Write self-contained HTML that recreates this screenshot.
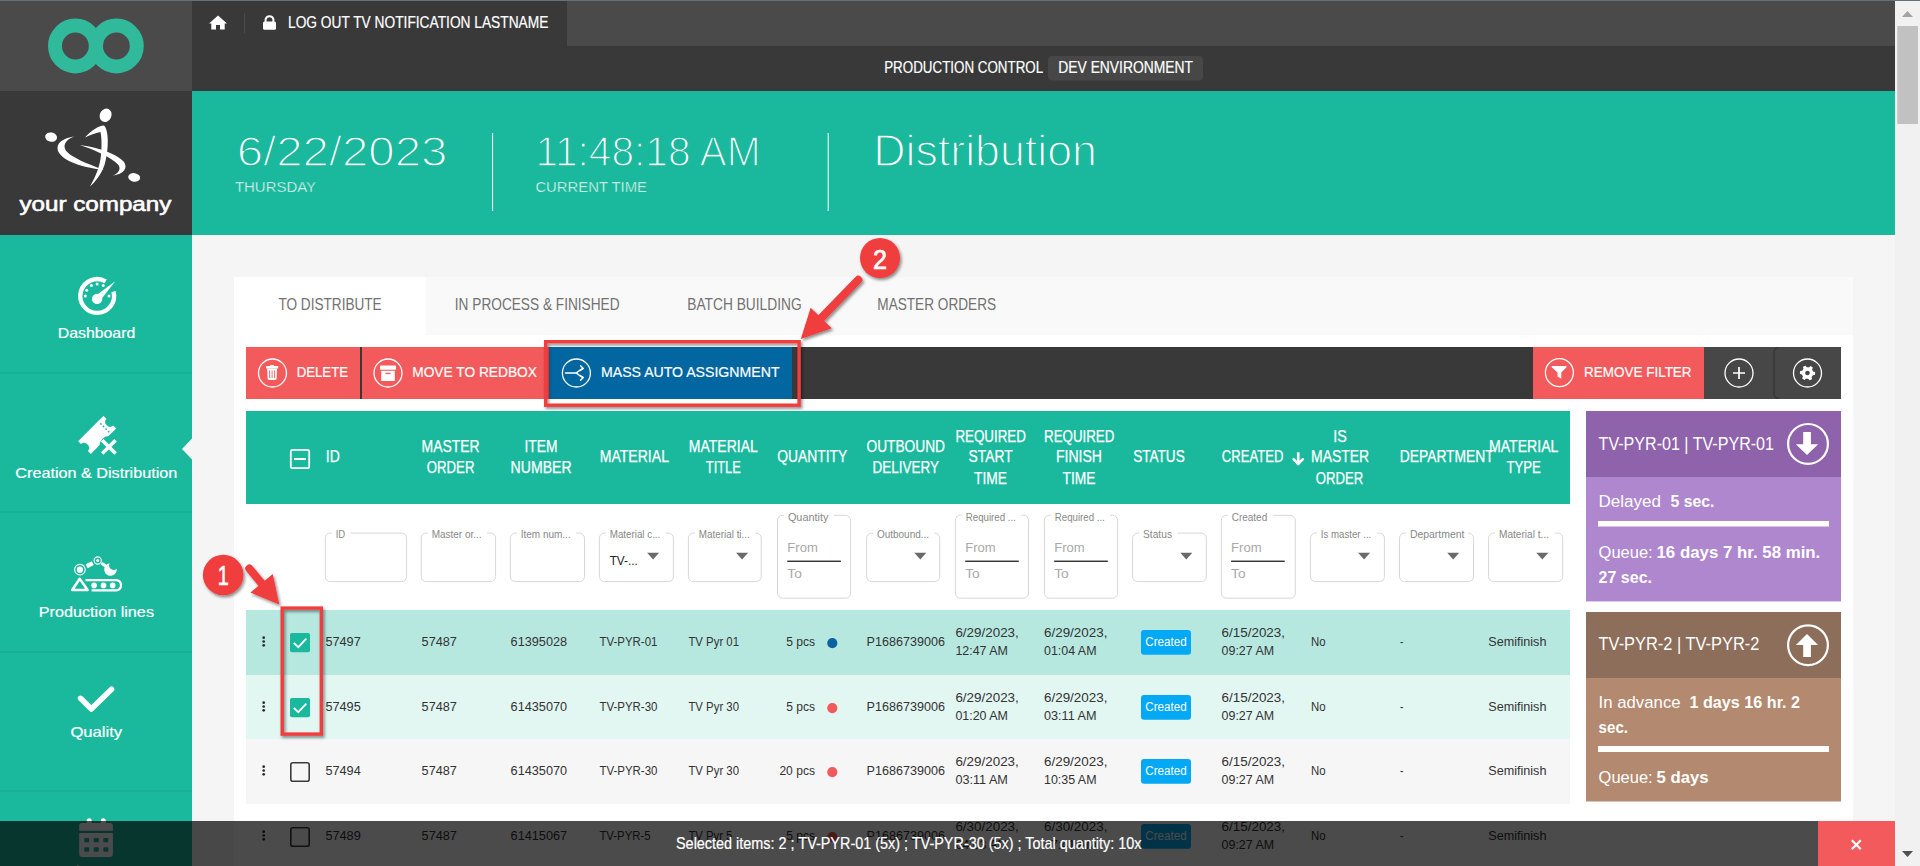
<!DOCTYPE html>
<html><head><meta charset="utf-8"><title>Distribution</title>
<style>
html,body{margin:0;padding:0;width:1920px;height:866px;overflow:hidden;background:#f5f5f5;}
svg{display:block;font-family:"Liberation Sans",sans-serif;}
</style></head>
<body>
<svg width="1920" height="866" viewBox="0 0 1920 866">
<rect x="0.00" y="0.00" width="1920.00" height="866.00" fill="#f5f5f5" />
<rect x="0.00" y="0.00" width="192.00" height="91.00" fill="#4a4a4a" />
<rect x="0.00" y="91.00" width="192.00" height="144.00" fill="#393939" />
<rect x="0.00" y="235.00" width="192.00" height="631.00" fill="#1ab99d" />
<rect x="0.00" y="372.50" width="192.00" height="1.00" fill="#16a78e" />
<rect x="0.00" y="511.50" width="192.00" height="1.00" fill="#16a78e" />
<rect x="0.00" y="651.50" width="192.00" height="1.00" fill="#16a78e" />
<rect x="0.00" y="790.50" width="192.00" height="1.00" fill="#16a78e" />
<circle cx="75.4" cy="46" r="20.4" fill="none" stroke="#30b99b" stroke-width="14"/>
<circle cx="116.4" cy="46" r="20.4" fill="none" stroke="#30b99b" stroke-width="14"/>
<g fill="#fff"><ellipse cx="105.6" cy="115.3" rx="5.8" ry="6.9" transform="rotate(25 105.6 115.3)"/><ellipse cx="51.1" cy="137.1" rx="6" ry="4.6" transform="rotate(12 51.1 137.1)"/><ellipse cx="134.2" cy="177.4" rx="6" ry="4.3" transform="rotate(8 134.2 177.4)"/><path d="M74.5 136.5 C63 138 55.5 143 58 151 C62 161 84 168 104 170 C88 164 70 157 65.5 150 C62.5 144 67 139 74.5 136.5 Z"/><path d="M79.7 145 C96 147 116 153 124 162 C128 168 124 174 112.6 175.7 C119 173 121 169 118.5 165 C111 157 95 150 79.7 145 Z"/><path d="M85 137.5 C92 130 98 126 104 125.5 C109 130 109 150 104.5 165 C101 175 95 182 90 186.5 C96 176 100 166 101 155 C102 145 101.5 137 100.5 132 C95 133 90 135 85 137.5 Z"/></g>
<text x="19.40" y="210.50" font-size="20.50" textLength="152.00" lengthAdjust="spacingAndGlyphs" fill="#fff"  stroke="#fff" stroke-width="0.6">your company</text>
<polygon points="182,449 192,438.5 192,459.5" fill="#f5f5f5"/>
<text x="57.70" y="338.30" font-size="15.55" textLength="77.60" lengthAdjust="spacingAndGlyphs" fill="#fff"  stroke="#fff" stroke-width="0.2">Dashboard</text>
<text x="15.30" y="478.00" font-size="15.55" textLength="162.00" lengthAdjust="spacingAndGlyphs" fill="#fff"  stroke="#fff" stroke-width="0.2">Creation &amp; Distribution</text>
<text x="38.70" y="617.30" font-size="15.55" textLength="115.30" lengthAdjust="spacingAndGlyphs" fill="#fff"  stroke="#fff" stroke-width="0.2">Production lines</text>
<text x="70.40" y="737.30" font-size="15.55" textLength="51.80" lengthAdjust="spacingAndGlyphs" fill="#fff"  stroke="#fff" stroke-width="0.2">Quality</text>
<g><path d="M113.5 291.6 A16.9 16.9 0 1 1 105.65 281.36" fill="none" stroke="#fff" stroke-width="4.4"/><circle cx="97.1" cy="298.9" r="5.2" fill="#fff"/><path d="M94.6 296.6 L115.2 281.2 L99.9 301.0 Z" fill="#fff"/><g fill="#fff"><circle cx="85.3" cy="296" r="1.5"/><circle cx="86.7" cy="290.2" r="1.5"/><circle cx="91.4" cy="285.6" r="1.5"/><circle cx="97.1" cy="284.1" r="1.5"/><circle cx="103.2" cy="285.6" r="1.5"/><circle cx="109" cy="296" r="1.5"/></g></g>
<path d="M78.1 441.2 L103.5 415.8 L106.4 418.7 A4.9 4.9 0 0 0 113.3 425.6 L116.2 428.5 L108.6 436.1 A10 10 0 0 0 99.4 445.3 L90.8 453.9 L87.9 451 A4.9 4.9 0 0 0 81 444.1 Z" fill="#fff"/>
<g fill="#1ab99d"><circle cx="100.9" cy="423.9" r="0.9"/><circle cx="103.5" cy="426.5" r="0.9"/><circle cx="106.1" cy="429.1" r="0.9"/><circle cx="108.7" cy="431.7" r="0.9"/></g>
<path d="M102.2 440.2 L115.6 453.6 M115.6 440.2 L102.2 453.6" stroke="#fff" stroke-width="3.6"/>
<g fill="none" stroke="#fff"><circle cx="79.9" cy="569.7" r="5.3" stroke-width="1.1"/><circle cx="97.7" cy="560.5" r="3.6" stroke-width="1.1"/><path d="M72.2 590 L79.7 578.7 L87.6 590 Z" stroke-width="2.5" stroke-linejoin="round"/><path d="M85.5 580.2 L116.6 580.2 A5.1 5.1 0 0 1 116.6 590.3 L91.6 590.3" stroke-width="2.2"/><path d="M86.6 566.2 L92.8 563.1" stroke-width="4.4"/><path d="M102.4 563.8 L106.5 566.8" stroke-width="3" stroke-linecap="round"/></g><g fill="#fff"><circle cx="79.9" cy="569.7" r="3.1"/><circle cx="97.7" cy="560.5" r="1.5"/><circle cx="94.1" cy="585.4" r="2.8"/><circle cx="103.5" cy="585.4" r="2.8"/><circle cx="112.7" cy="585.4" r="2.8"/><path d="M109.67 563.25 A6.3 6.3 0 1 0 116.77 568.83 A4.6 4.6 0 0 1 109.67 563.25 Z"/></g>
<path d="M80.5 698.3 L91.3 709 L111.5 689.2" fill="none" stroke="#fff" stroke-width="5.5" stroke-linecap="round" stroke-linejoin="round"/>
<g fill="#fff"><path d="M82.2 822.9 L109.9 822.9 A3 3 0 0 1 112.9 825.9 L112.9 830.7 L79.2 830.7 L79.2 825.9 A3 3 0 0 1 82.2 822.9 Z"/><path d="M79.2 833.0 L112.9 833.0 L112.9 854.1 A3 3 0 0 1 109.9 857.1 L82.2 857.1 A3 3 0 0 1 79.2 854.1 Z"/><rect x="86.7" y="818.3" width="5" height="7" rx="2.5"/><rect x="100.8" y="818.3" width="5" height="7" rx="2.5"/></g><g fill="#1ab99d"><rect x="84.2" y="837.9" width="5" height="4.3" rx="0.8"/><rect x="93.75" y="837.9" width="5" height="4.3" rx="0.8"/><rect x="103.3" y="837.9" width="5" height="4.3" rx="0.8"/><rect x="84.2" y="847.2" width="5" height="4.6" rx="0.8"/><rect x="93.75" y="847.2" width="5" height="4.6" rx="0.8"/><rect x="103.3" y="847.2" width="5" height="4.6" rx="0.8"/></g>
<text x="56.00" y="876.20" font-size="15.55" textLength="82.00" lengthAdjust="spacingAndGlyphs" fill="#fff"  stroke="#fff" stroke-width="0.2">Maintenance</text>
<rect x="192.00" y="0.00" width="1703.00" height="91.00" fill="#393939" />
<rect x="567.00" y="0.00" width="1328.00" height="46.00" fill="#4a4a4a" />
<path d="M218 15.5 L227 23.5 L224.7 23.5 L224.7 29.5 L220 29.5 L220 25 L216 25 L216 29.5 L211.3 29.5 L211.3 23.5 L209 23.5 Z" fill="#fff"/>
<rect x="244.00" y="13.40" width="1.00" height="20.10" fill="#4b4b4b" />
<path d="M265.6 22 L265.6 19.3 A4 4 0 0 1 273.4 19.3 L273.4 22" fill="none" stroke="#fff" stroke-width="2"/>
<rect x="263" y="21.5" width="13" height="8.3" rx="1.5" fill="#fff"/>
<text x="288.00" y="28.40" font-size="15.70" textLength="260.40" lengthAdjust="spacingAndGlyphs" fill="#fff"  stroke="#fff" stroke-width="0.2">LOG OUT TV NOTIFICATION LASTNAME</text>
<text x="884.20" y="73.25" font-size="16.13" textLength="159.00" lengthAdjust="spacingAndGlyphs" fill="#fff"  stroke="#fff" stroke-width="0.2">PRODUCTION CONTROL</text>
<rect x="1048" y="56" width="155" height="24.5" rx="4" fill="#474747"/>
<text x="1058.30" y="73.25" font-size="16.13" textLength="134.70" lengthAdjust="spacingAndGlyphs" fill="#fff"  stroke="#fff" stroke-width="0.2">DEV ENVIRONMENT</text>
<rect x="192.00" y="91.00" width="1703.00" height="144.00" fill="#1ab99d" />
<text x="236.70" y="166.40" font-size="41.81" textLength="210.70" lengthAdjust="spacingAndGlyphs" fill="#fff" stroke="#1ab99d" stroke-width="1.5">6/22/2023</text>
<text x="234.90" y="191.90" font-size="15.41" textLength="81.20" lengthAdjust="spacingAndGlyphs" fill="#fff" stroke="#1ab99d" stroke-width="0.45">THURSDAY</text>
<rect x="492.10" y="133.00" width="1.00" height="78.00" fill="#fff" />
<text x="535.40" y="166.40" font-size="41.81" textLength="225.20" lengthAdjust="spacingAndGlyphs" fill="#fff" stroke="#1ab99d" stroke-width="1.5">11:48:18 AM</text>
<text x="535.40" y="191.90" font-size="15.41" textLength="111.60" lengthAdjust="spacingAndGlyphs" fill="#fff" stroke="#1ab99d" stroke-width="0.45">CURRENT TIME</text>
<rect x="827.70" y="133.00" width="1.00" height="78.00" fill="#fff" />
<text x="873.20" y="166.40" font-size="43.75" textLength="223.80" lengthAdjust="spacingAndGlyphs" fill="#fff" stroke="#1ab99d" stroke-width="1.5">Distribution</text>
<rect x="0.00" y="0.00" width="1920.00" height="1.00" fill="#65717a" />
<rect x="234.00" y="277.00" width="1619.00" height="589.00" fill="#ffffff" />
<rect x="426.00" y="277.00" width="1427.00" height="58.00" fill="#f9f9f9" />
<text x="278.40" y="310.20" font-size="15.70" textLength="103.30" lengthAdjust="spacingAndGlyphs" fill="#717171" >TO DISTRIBUTE</text>
<text x="454.80" y="310.20" font-size="15.70" textLength="164.80" lengthAdjust="spacingAndGlyphs" fill="#717171" >IN PROCESS &amp; FINISHED</text>
<text x="687.30" y="310.20" font-size="15.70" textLength="114.30" lengthAdjust="spacingAndGlyphs" fill="#717171" >BATCH BUILDING</text>
<text x="877.30" y="310.20" font-size="15.70" textLength="118.80" lengthAdjust="spacingAndGlyphs" fill="#717171" >MASTER ORDERS</text>
<rect x="246.00" y="347.00" width="1595.00" height="52.00" fill="#393939" />
<rect x="246.00" y="347.00" width="303.50" height="52.00" fill="#f25a5b" />
<rect x="360.00" y="347.00" width="2.00" height="52.00" fill="#393939" />
<rect x="549.50" y="347.00" width="242.50" height="52.00" fill="#0266a1" />
<rect x="1533.00" y="347.00" width="171.00" height="52.00" fill="#f25a5b" />
<rect x="1704.00" y="347.00" width="137.00" height="52.00" fill="#474747" />
<path d="M1779 347.6 A5 5 0 0 0 1774 352.6 L1774 393.4 A5 5 0 0 0 1779 398.4" fill="none" stroke="#363636" stroke-width="1.3"/>
<circle cx="272.5" cy="373" r="14" fill="none" stroke="#fff" stroke-width="1.3"/>
<circle cx="388" cy="373" r="14" fill="none" stroke="#fff" stroke-width="1.3"/>
<circle cx="576.4" cy="373" r="14" fill="none" stroke="#fff" stroke-width="1.3"/>
<circle cx="1559.4" cy="372.6" r="14" fill="none" stroke="#fff" stroke-width="1.3"/>
<circle cx="1739" cy="373" r="14" fill="none" stroke="#fff" stroke-width="1.3"/>
<circle cx="1807.5" cy="373" r="14" fill="none" stroke="#fff" stroke-width="1.3"/>
<g fill="#fff"><rect x="266" y="366" width="12.2" height="2.4" rx="0.6"/><rect x="270.2" y="364.9" width="3.8" height="1.6" rx="0.6"/><path d="M267.2 368.6 L277 368.6 L276.6 378.6 A1.4 1.4 0 0 1 275.2 380 L269 380 A1.4 1.4 0 0 1 267.6 378.6 Z"/></g><g stroke="#f25a5b" stroke-width="0.9"><path d="M269.6 370.5 L269.6 378 M272.1 370.5 L272.1 378 M274.6 370.5 L274.6 378"/></g>
<g fill="#fff"><rect x="380" y="365.5" width="16" height="4.2" rx="0.8"/><path d="M381.2 370.8 L394.8 370.8 L394.8 381 L381.2 381 Z"/></g><rect x="385.5" y="372.8" width="5" height="1.3" fill="#f25a5b"/>
<g fill="none" stroke="#fff" stroke-width="1.4" stroke-linecap="round" stroke-linejoin="round"><path d="M565.5 373 L575.5 373 C578 373 579.5 369.5 583 368.5 M575.5 373 C578 373 579.5 376.5 583 377.5"/><path d="M580.5 365.8 L583.3 368.5 L580 370.6 M580 375.4 L583.3 377.5 L580.5 380.2"/></g>
<path d="M1552.2 366 L1566 366 A0.8 0.8 0 0 1 1566.5 367.2 L1561.3 372.6 L1561.3 378.8 L1557.5 376.6 L1557.5 372.6 L1551.7 367.2 A0.8 0.8 0 0 1 1552.2 366 Z" fill="#fff"/>
<path d="M1733 373 L1745 373 M1739 367 L1739 379" stroke="#fff" stroke-width="1.7"/>
<polygon points="1815.10,373.00 1815.03,373.99 1814.84,374.97 1812.77,375.18 1812.44,375.85 1812.02,376.47 1811.53,377.03 1812.13,379.03 1811.30,379.58 1810.41,380.02 1809.47,380.34 1808.24,378.65 1807.50,378.70 1806.76,378.65 1806.02,378.51 1804.59,380.02 1803.70,379.58 1802.87,379.03 1802.13,378.37 1802.98,376.47 1802.56,375.85 1802.23,375.18 1801.99,374.48 1799.97,373.99 1799.90,373.00 1799.97,372.01 1800.16,371.03 1802.23,370.82 1802.56,370.15 1802.98,369.53 1803.47,368.97 1802.87,366.97 1803.70,366.42 1804.59,365.98 1805.53,365.66 1806.76,367.35 1807.50,367.30 1808.24,367.35 1808.98,367.49 1810.41,365.98 1811.30,366.42 1812.13,366.97 1812.87,367.63 1812.02,369.53 1812.44,370.15 1812.77,370.82 1813.01,371.52 1815.03,372.01" fill="#fff"/><circle cx="1807.5" cy="373" r="2.3" fill="#474747"/>
<text x="296.70" y="377.40" font-size="15.55" textLength="51.30" lengthAdjust="spacingAndGlyphs" fill="#fff"  stroke="#fff" stroke-width="0.2">DELETE</text>
<text x="412.20" y="377.40" font-size="15.55" textLength="124.80" lengthAdjust="spacingAndGlyphs" fill="#fff"  stroke="#fff" stroke-width="0.2">MOVE TO REDBOX</text>
<text x="601.00" y="377.20" font-size="15.55" textLength="178.50" lengthAdjust="spacingAndGlyphs" fill="#fff"  stroke="#fff" stroke-width="0.2">MASS AUTO ASSIGNMENT</text>
<text x="1584.00" y="377.30" font-size="15.55" textLength="107.60" lengthAdjust="spacingAndGlyphs" fill="#fff"  stroke="#fff" stroke-width="0.2">REMOVE FILTER</text>
<rect x="246.00" y="411.00" width="1324.00" height="93.00" fill="#1ab99d" />
<rect x="290.8" y="449.8" width="18.4" height="18.4" rx="2" fill="none" stroke="#fff" stroke-width="1.8"/>
<rect x="294" y="458" width="12" height="2" fill="#fff"/>
<text x="325.80" y="462.10" font-size="15.77" textLength="14.00" lengthAdjust="spacingAndGlyphs" fill="#fff"  stroke="#fff" stroke-width="0.25">ID</text>
<text x="421.60" y="452.30" font-size="15.77" textLength="58.10" lengthAdjust="spacingAndGlyphs" fill="#fff"  stroke="#fff" stroke-width="0.25">MASTER</text>
<text x="426.80" y="473.00" font-size="15.77" textLength="47.60" lengthAdjust="spacingAndGlyphs" fill="#fff"  stroke="#fff" stroke-width="0.25">ORDER</text>
<text x="524.50" y="452.30" font-size="15.77" textLength="33.00" lengthAdjust="spacingAndGlyphs" fill="#fff"  stroke="#fff" stroke-width="0.25">ITEM</text>
<text x="510.60" y="473.00" font-size="15.77" textLength="61.00" lengthAdjust="spacingAndGlyphs" fill="#fff"  stroke="#fff" stroke-width="0.25">NUMBER</text>
<text x="599.70" y="462.10" font-size="15.77" textLength="69.30" lengthAdjust="spacingAndGlyphs" fill="#fff"  stroke="#fff" stroke-width="0.25">MATERIAL</text>
<text x="688.80" y="452.30" font-size="15.77" textLength="69.00" lengthAdjust="spacingAndGlyphs" fill="#fff"  stroke="#fff" stroke-width="0.25">MATERIAL</text>
<text x="705.80" y="473.00" font-size="15.77" textLength="35.00" lengthAdjust="spacingAndGlyphs" fill="#fff"  stroke="#fff" stroke-width="0.25">TITLE</text>
<text x="777.25" y="462.10" font-size="15.77" textLength="70.00" lengthAdjust="spacingAndGlyphs" fill="#fff"  stroke="#fff" stroke-width="0.25">QUANTITY</text>
<text x="866.50" y="452.30" font-size="15.77" textLength="78.50" lengthAdjust="spacingAndGlyphs" fill="#fff"  stroke="#fff" stroke-width="0.25">OUTBOUND</text>
<text x="872.50" y="473.00" font-size="15.77" textLength="66.50" lengthAdjust="spacingAndGlyphs" fill="#fff"  stroke="#fff" stroke-width="0.25">DELIVERY</text>
<text x="955.40" y="441.50" font-size="15.77" textLength="70.50" lengthAdjust="spacingAndGlyphs" fill="#fff"  stroke="#fff" stroke-width="0.25">REQUIRED</text>
<text x="968.60" y="462.10" font-size="15.77" textLength="44.00" lengthAdjust="spacingAndGlyphs" fill="#fff"  stroke="#fff" stroke-width="0.25">START</text>
<text x="974.10" y="483.70" font-size="15.77" textLength="33.00" lengthAdjust="spacingAndGlyphs" fill="#fff"  stroke="#fff" stroke-width="0.25">TIME</text>
<text x="1044.00" y="441.50" font-size="15.77" textLength="70.40" lengthAdjust="spacingAndGlyphs" fill="#fff"  stroke="#fff" stroke-width="0.25">REQUIRED</text>
<text x="1056.00" y="462.10" font-size="15.77" textLength="46.00" lengthAdjust="spacingAndGlyphs" fill="#fff"  stroke="#fff" stroke-width="0.25">FINISH</text>
<text x="1062.50" y="483.70" font-size="15.77" textLength="33.00" lengthAdjust="spacingAndGlyphs" fill="#fff"  stroke="#fff" stroke-width="0.25">TIME</text>
<text x="1133.20" y="462.10" font-size="15.77" textLength="51.50" lengthAdjust="spacingAndGlyphs" fill="#fff"  stroke="#fff" stroke-width="0.25">STATUS</text>
<text x="1221.80" y="462.10" font-size="15.77" textLength="61.60" lengthAdjust="spacingAndGlyphs" fill="#fff"  stroke="#fff" stroke-width="0.25">CREATED</text>
<path d="M1298.2 452.3 L1298.2 462" stroke="#fff" stroke-width="2.6"/><path d="M1293.6 459.2 L1298.2 464 L1302.8 459.2" fill="none" stroke="#fff" stroke-width="2.6" stroke-linecap="round" stroke-linejoin="round"/>
<text x="1333.25" y="441.60" font-size="15.77" textLength="13.50" lengthAdjust="spacingAndGlyphs" fill="#fff"  stroke="#fff" stroke-width="0.25">IS</text>
<text x="1311.00" y="462.10" font-size="15.77" textLength="58.20" lengthAdjust="spacingAndGlyphs" fill="#fff"  stroke="#fff" stroke-width="0.25">MASTER</text>
<text x="1315.70" y="483.70" font-size="15.77" textLength="47.50" lengthAdjust="spacingAndGlyphs" fill="#fff"  stroke="#fff" stroke-width="0.25">ORDER</text>
<text x="1399.80" y="462.10" font-size="15.77" textLength="93.90" lengthAdjust="spacingAndGlyphs" fill="#fff"  stroke="#fff" stroke-width="0.25">DEPARTMENT</text>
<text x="1489.00" y="452.30" font-size="15.77" textLength="69.40" lengthAdjust="spacingAndGlyphs" fill="#fff"  stroke="#fff" stroke-width="0.25">MATERIAL</text>
<text x="1506.45" y="473.00" font-size="15.77" textLength="34.50" lengthAdjust="spacingAndGlyphs" fill="#fff"  stroke="#fff" stroke-width="0.25">TYPE</text>
<path d="M331.80 533.10 L330.30 533.10 A5 5 0 0 0 325.30 538.10 L325.30 576.60 A5 5 0 0 0 330.30 581.60 L401.60 581.60 A5 5 0 0 0 406.60 576.60 L406.60 538.10 A5 5 0 0 0 401.60 533.10 L350.70 533.10" fill="none" stroke="#d8d8d8" stroke-width="1"/>
<text x="335.70" y="538.20" font-size="11.19" textLength="9.50" lengthAdjust="spacingAndGlyphs" fill="#888888" >ID</text>
<path d="M427.75 533.10 L426.25 533.10 A5 5 0 0 0 421.25 538.10 L421.25 576.60 A5 5 0 0 0 426.25 581.60 L490.60 581.60 A5 5 0 0 0 495.60 576.60 L495.60 538.10 A5 5 0 0 0 490.60 533.10 L487.15 533.10" fill="none" stroke="#d8d8d8" stroke-width="1"/>
<text x="431.65" y="538.20" font-size="11.19" textLength="50.00" lengthAdjust="spacingAndGlyphs" fill="#888888" >Master or...</text>
<path d="M516.80 533.10 L515.30 533.10 A5 5 0 0 0 510.30 538.10 L510.30 576.60 A5 5 0 0 0 515.30 581.60 L579.50 581.60 A5 5 0 0 0 584.50 576.60 L584.50 538.10 A5 5 0 0 0 579.50 533.10 L576.20 533.10" fill="none" stroke="#d8d8d8" stroke-width="1"/>
<text x="520.70" y="538.20" font-size="11.19" textLength="50.00" lengthAdjust="spacingAndGlyphs" fill="#888888" >Item num...</text>
<path d="M605.90 533.10 L604.40 533.10 A5 5 0 0 0 599.40 538.10 L599.40 576.60 A5 5 0 0 0 604.40 581.60 L668.40 581.60 A5 5 0 0 0 673.40 576.60 L673.40 538.10 A5 5 0 0 0 668.40 533.10 L665.80 533.10" fill="none" stroke="#d8d8d8" stroke-width="1"/>
<text x="609.80" y="538.20" font-size="11.19" textLength="50.50" lengthAdjust="spacingAndGlyphs" fill="#888888" >Material c...</text>
<polygon points="647.10,552.8 659.10,552.8 653.10,559.4" fill="#6a6a6a"/>
<text x="609.70" y="564.60" font-size="11.92" textLength="28.00" lengthAdjust="spacingAndGlyphs" fill="#222" >TV-...</text>
<path d="M694.90 533.10 L693.40 533.10 A5 5 0 0 0 688.40 538.10 L688.40 576.60 A5 5 0 0 0 693.40 581.60 L756.20 581.60 A5 5 0 0 0 761.20 576.60 L761.20 538.10 A5 5 0 0 0 756.20 533.10 L755.30 533.10" fill="none" stroke="#d8d8d8" stroke-width="1"/>
<text x="698.80" y="538.20" font-size="11.19" textLength="51.00" lengthAdjust="spacingAndGlyphs" fill="#888888" >Material ti...</text>
<polygon points="736.10,552.8 748.10,552.8 742.10,559.4" fill="#6a6a6a"/>
<path d="M784.00 515.30 L782.50 515.30 A5 5 0 0 0 777.50 520.30 L777.50 593.20 A5 5 0 0 0 782.50 598.20 L845.60 598.20 A5 5 0 0 0 850.60 593.20 L850.60 520.30 A5 5 0 0 0 845.60 515.30 L833.90 515.30" fill="none" stroke="#d8d8d8" stroke-width="1"/>
<text x="787.90" y="521.00" font-size="11.19" textLength="40.50" lengthAdjust="spacingAndGlyphs" fill="#888888" >Quantity</text>
<text x="787.30" y="552.00" font-size="12.79" textLength="30.50" lengthAdjust="spacingAndGlyphs" fill="#a9a9a9" >From</text>
<rect x="787.30" y="560.60" width="53.60" height="1.30" fill="#1e1e1e" />
<text x="787.30" y="578.00" font-size="12.79" textLength="14.50" lengthAdjust="spacingAndGlyphs" fill="#a9a9a9" >To</text>
<path d="M873.10 533.10 L871.60 533.10 A5 5 0 0 0 866.60 538.10 L866.60 576.60 A5 5 0 0 0 871.60 581.60 L934.70 581.60 A5 5 0 0 0 939.70 576.60 L939.70 538.10 A5 5 0 0 0 934.70 533.10 L934.50 533.10" fill="none" stroke="#d8d8d8" stroke-width="1"/>
<text x="877.00" y="538.20" font-size="11.19" textLength="52.00" lengthAdjust="spacingAndGlyphs" fill="#888888" >Outbound...</text>
<polygon points="914.30,552.8 926.30,552.8 920.30,559.4" fill="#6a6a6a"/>
<path d="M961.90 515.30 L960.40 515.30 A5 5 0 0 0 955.40 520.30 L955.40 593.20 A5 5 0 0 0 960.40 598.20 L1023.50 598.20 A5 5 0 0 0 1028.50 593.20 L1028.50 520.30 A5 5 0 0 0 1023.50 515.30 L1021.30 515.30" fill="none" stroke="#d8d8d8" stroke-width="1"/>
<text x="965.80" y="521.00" font-size="11.19" textLength="50.00" lengthAdjust="spacingAndGlyphs" fill="#888888" >Required ...</text>
<text x="965.20" y="552.00" font-size="12.79" textLength="30.50" lengthAdjust="spacingAndGlyphs" fill="#a9a9a9" >From</text>
<rect x="965.20" y="560.60" width="53.60" height="1.30" fill="#1e1e1e" />
<text x="965.20" y="578.00" font-size="12.79" textLength="14.50" lengthAdjust="spacingAndGlyphs" fill="#a9a9a9" >To</text>
<path d="M1050.90 515.30 L1049.40 515.30 A5 5 0 0 0 1044.40 520.30 L1044.40 593.20 A5 5 0 0 0 1049.40 598.20 L1112.60 598.20 A5 5 0 0 0 1117.60 593.20 L1117.60 520.30 A5 5 0 0 0 1112.60 515.30 L1110.30 515.30" fill="none" stroke="#d8d8d8" stroke-width="1"/>
<text x="1054.80" y="521.00" font-size="11.19" textLength="50.00" lengthAdjust="spacingAndGlyphs" fill="#888888" >Required ...</text>
<text x="1054.20" y="552.00" font-size="12.79" textLength="30.50" lengthAdjust="spacingAndGlyphs" fill="#a9a9a9" >From</text>
<rect x="1054.20" y="560.60" width="53.60" height="1.30" fill="#1e1e1e" />
<text x="1054.20" y="578.00" font-size="12.79" textLength="14.50" lengthAdjust="spacingAndGlyphs" fill="#a9a9a9" >To</text>
<path d="M1139.10 533.10 L1137.60 533.10 A5 5 0 0 0 1132.60 538.10 L1132.60 576.60 A5 5 0 0 0 1137.60 581.60 L1201.30 581.60 A5 5 0 0 0 1206.30 576.60 L1206.30 538.10 A5 5 0 0 0 1201.30 533.10 L1177.50 533.10" fill="none" stroke="#d8d8d8" stroke-width="1"/>
<text x="1143.00" y="538.20" font-size="11.19" textLength="29.00" lengthAdjust="spacingAndGlyphs" fill="#888888" >Status</text>
<polygon points="1180.30,552.8 1192.30,552.8 1186.30,559.4" fill="#6a6a6a"/>
<path d="M1227.80 515.30 L1226.30 515.30 A5 5 0 0 0 1221.30 520.30 L1221.30 593.20 A5 5 0 0 0 1226.30 598.20 L1290.30 598.20 A5 5 0 0 0 1295.30 593.20 L1295.30 520.30 A5 5 0 0 0 1290.30 515.30 L1272.70 515.30" fill="none" stroke="#d8d8d8" stroke-width="1"/>
<text x="1231.70" y="521.00" font-size="11.19" textLength="35.50" lengthAdjust="spacingAndGlyphs" fill="#888888" >Created</text>
<text x="1231.10" y="552.00" font-size="12.79" textLength="30.50" lengthAdjust="spacingAndGlyphs" fill="#a9a9a9" >From</text>
<rect x="1231.10" y="560.60" width="53.60" height="1.30" fill="#1e1e1e" />
<text x="1231.10" y="578.00" font-size="12.79" textLength="14.50" lengthAdjust="spacingAndGlyphs" fill="#a9a9a9" >To</text>
<path d="M1316.90 533.10 L1315.40 533.10 A5 5 0 0 0 1310.40 538.10 L1310.40 576.60 A5 5 0 0 0 1315.40 581.60 L1379.40 581.60 A5 5 0 0 0 1384.40 576.60 L1384.40 538.10 A5 5 0 0 0 1379.40 533.10 L1376.80 533.10" fill="none" stroke="#d8d8d8" stroke-width="1"/>
<text x="1320.80" y="538.20" font-size="11.19" textLength="50.50" lengthAdjust="spacingAndGlyphs" fill="#888888" >Is master ...</text>
<polygon points="1358.10,552.8 1370.10,552.8 1364.10,559.4" fill="#6a6a6a"/>
<path d="M1406.00 533.10 L1404.50 533.10 A5 5 0 0 0 1399.50 538.10 L1399.50 576.60 A5 5 0 0 0 1404.50 581.60 L1468.50 581.60 A5 5 0 0 0 1473.50 576.60 L1473.50 538.10 A5 5 0 0 0 1468.50 533.10 L1469.90 533.10" fill="none" stroke="#d8d8d8" stroke-width="1"/>
<text x="1409.90" y="538.20" font-size="11.19" textLength="54.50" lengthAdjust="spacingAndGlyphs" fill="#888888" >Department</text>
<polygon points="1447.20,552.8 1459.20,552.8 1453.20,559.4" fill="#6a6a6a"/>
<path d="M1495.10 533.10 L1493.60 533.10 A5 5 0 0 0 1488.60 538.10 L1488.60 576.60 A5 5 0 0 0 1493.60 581.60 L1557.70 581.60 A5 5 0 0 0 1562.70 576.60 L1562.70 538.10 A5 5 0 0 0 1557.70 533.10 L1554.50 533.10" fill="none" stroke="#d8d8d8" stroke-width="1"/>
<text x="1499.00" y="538.20" font-size="11.19" textLength="50.00" lengthAdjust="spacingAndGlyphs" fill="#888888" >Material t...</text>
<polygon points="1536.30,552.8 1548.30,552.8 1542.30,559.4" fill="#6a6a6a"/>
<rect x="246.00" y="610.00" width="1324.00" height="65.00" fill="#b6e8e0" />
<circle cx="263.7" cy="637.70" r="1.35" fill="#2a2a2a"/>
<circle cx="263.7" cy="641.50" r="1.35" fill="#2a2a2a"/>
<circle cx="263.7" cy="645.30" r="1.35" fill="#2a2a2a"/>
<rect x="290" y="633.00" width="20" height="19.3" rx="2" fill="#1ab99d"/>
<path d="M293.8 642.80 L298.3 647.20 L306.3 638.60" fill="none" stroke="#fff" stroke-width="1.8"/>
<text x="325.40" y="645.90" font-size="12.71" textLength="35.34" lengthAdjust="spacingAndGlyphs" fill="#333333" >57497</text>
<text x="421.60" y="645.90" font-size="12.71" textLength="35.34" lengthAdjust="spacingAndGlyphs" fill="#333333" >57487</text>
<text x="510.60" y="645.90" font-size="12.71" textLength="56.55" lengthAdjust="spacingAndGlyphs" fill="#333333" >61395028</text>
<text x="599.40" y="645.90" font-size="12.50" textLength="58.07" lengthAdjust="spacingAndGlyphs" fill="#333333" >TV-PYR-01</text>
<text x="688.40" y="645.90" font-size="12.50" textLength="50.60" lengthAdjust="spacingAndGlyphs" fill="#333333" >TV Pyr 01</text>
<text x="786.14" y="645.90" font-size="12.71" textLength="28.86" lengthAdjust="spacingAndGlyphs" fill="#333333" >5 pcs</text>
<circle cx="832.3" cy="643.10" r="5.1" fill="#0a62a0"/>
<text x="866.60" y="645.90" font-size="12.71" textLength="78.32" lengthAdjust="spacingAndGlyphs" fill="#333333" >P1686739006</text>
<text x="955.40" y="637.10" font-size="12.71" textLength="63.40" lengthAdjust="spacingAndGlyphs" fill="#333333" >6/29/2023,</text>
<text x="955.40" y="655.00" font-size="12.71" textLength="52.50" lengthAdjust="spacingAndGlyphs" fill="#333333" >12:47 AM</text>
<text x="1044.00" y="637.10" font-size="12.71" textLength="63.40" lengthAdjust="spacingAndGlyphs" fill="#333333" >6/29/2023,</text>
<text x="1044.00" y="655.00" font-size="12.71" textLength="52.50" lengthAdjust="spacingAndGlyphs" fill="#333333" >01:04 AM</text>
<rect x="1141" y="630.00" width="50" height="24.8" rx="3" fill="#03a9f4"/>
<text x="1145.30" y="645.90" font-size="12.50" textLength="41.30" lengthAdjust="spacingAndGlyphs" fill="#fff" >Created</text>
<text x="1221.60" y="637.10" font-size="12.71" textLength="63.40" lengthAdjust="spacingAndGlyphs" fill="#333333" >6/15/2023,</text>
<text x="1221.60" y="655.00" font-size="12.71" textLength="52.50" lengthAdjust="spacingAndGlyphs" fill="#333333" >09:27 AM</text>
<text x="1310.90" y="645.90" font-size="12.50" textLength="14.60" lengthAdjust="spacingAndGlyphs" fill="#333333" >No</text>
<text x="1400.00" y="645.90" font-size="12.71" textLength="3.40" lengthAdjust="spacingAndGlyphs" fill="#333333" >-</text>
<text x="1488.30" y="645.90" font-size="12.50" textLength="58.10" lengthAdjust="spacingAndGlyphs" fill="#333333" >Semifinish</text>
<rect x="246.00" y="675.00" width="1324.00" height="64.00" fill="#e2f6f2" />
<circle cx="263.7" cy="702.70" r="1.35" fill="#2a2a2a"/>
<circle cx="263.7" cy="706.50" r="1.35" fill="#2a2a2a"/>
<circle cx="263.7" cy="710.30" r="1.35" fill="#2a2a2a"/>
<rect x="290" y="698.00" width="20" height="19.3" rx="2" fill="#1ab99d"/>
<path d="M293.8 707.80 L298.3 712.20 L306.3 703.60" fill="none" stroke="#fff" stroke-width="1.8"/>
<text x="325.40" y="710.90" font-size="12.71" textLength="35.34" lengthAdjust="spacingAndGlyphs" fill="#333333" >57495</text>
<text x="421.60" y="710.90" font-size="12.71" textLength="35.34" lengthAdjust="spacingAndGlyphs" fill="#333333" >57487</text>
<text x="510.60" y="710.90" font-size="12.71" textLength="56.55" lengthAdjust="spacingAndGlyphs" fill="#333333" >61435070</text>
<text x="599.40" y="710.90" font-size="12.50" textLength="58.07" lengthAdjust="spacingAndGlyphs" fill="#333333" >TV-PYR-30</text>
<text x="688.40" y="710.90" font-size="12.50" textLength="50.60" lengthAdjust="spacingAndGlyphs" fill="#333333" >TV Pyr 30</text>
<text x="786.14" y="710.90" font-size="12.71" textLength="28.86" lengthAdjust="spacingAndGlyphs" fill="#333333" >5 pcs</text>
<circle cx="832.3" cy="708.10" r="5.1" fill="#f05a5a"/>
<text x="866.60" y="710.90" font-size="12.71" textLength="78.32" lengthAdjust="spacingAndGlyphs" fill="#333333" >P1686739006</text>
<text x="955.40" y="702.10" font-size="12.71" textLength="63.40" lengthAdjust="spacingAndGlyphs" fill="#333333" >6/29/2023,</text>
<text x="955.40" y="720.00" font-size="12.71" textLength="52.50" lengthAdjust="spacingAndGlyphs" fill="#333333" >01:20 AM</text>
<text x="1044.00" y="702.10" font-size="12.71" textLength="63.40" lengthAdjust="spacingAndGlyphs" fill="#333333" >6/29/2023,</text>
<text x="1044.00" y="720.00" font-size="12.71" textLength="52.50" lengthAdjust="spacingAndGlyphs" fill="#333333" >03:11 AM</text>
<rect x="1141" y="695.00" width="50" height="24.8" rx="3" fill="#03a9f4"/>
<text x="1145.30" y="710.90" font-size="12.50" textLength="41.30" lengthAdjust="spacingAndGlyphs" fill="#fff" >Created</text>
<text x="1221.60" y="702.10" font-size="12.71" textLength="63.40" lengthAdjust="spacingAndGlyphs" fill="#333333" >6/15/2023,</text>
<text x="1221.60" y="720.00" font-size="12.71" textLength="52.50" lengthAdjust="spacingAndGlyphs" fill="#333333" >09:27 AM</text>
<text x="1310.90" y="710.90" font-size="12.50" textLength="14.60" lengthAdjust="spacingAndGlyphs" fill="#333333" >No</text>
<text x="1400.00" y="710.90" font-size="12.71" textLength="3.40" lengthAdjust="spacingAndGlyphs" fill="#333333" >-</text>
<text x="1488.30" y="710.90" font-size="12.50" textLength="58.10" lengthAdjust="spacingAndGlyphs" fill="#333333" >Semifinish</text>
<rect x="246.00" y="739.00" width="1324.00" height="65.00" fill="#f6f6f6" />
<circle cx="263.7" cy="766.70" r="1.35" fill="#2a2a2a"/>
<circle cx="263.7" cy="770.50" r="1.35" fill="#2a2a2a"/>
<circle cx="263.7" cy="774.30" r="1.35" fill="#2a2a2a"/>
<rect x="290.8" y="762.80" width="18.4" height="18.4" rx="2" fill="none" stroke="#3c3c3c" stroke-width="1.6"/>
<text x="325.40" y="774.90" font-size="12.71" textLength="35.34" lengthAdjust="spacingAndGlyphs" fill="#333333" >57494</text>
<text x="421.60" y="774.90" font-size="12.71" textLength="35.34" lengthAdjust="spacingAndGlyphs" fill="#333333" >57487</text>
<text x="510.60" y="774.90" font-size="12.71" textLength="56.55" lengthAdjust="spacingAndGlyphs" fill="#333333" >61435070</text>
<text x="599.40" y="774.90" font-size="12.50" textLength="58.07" lengthAdjust="spacingAndGlyphs" fill="#333333" >TV-PYR-30</text>
<text x="688.40" y="774.90" font-size="12.50" textLength="50.60" lengthAdjust="spacingAndGlyphs" fill="#333333" >TV Pyr 30</text>
<text x="779.42" y="774.90" font-size="12.71" textLength="35.58" lengthAdjust="spacingAndGlyphs" fill="#333333" >20 pcs</text>
<circle cx="832.3" cy="772.10" r="5.1" fill="#f05a5a"/>
<text x="866.60" y="774.90" font-size="12.71" textLength="78.32" lengthAdjust="spacingAndGlyphs" fill="#333333" >P1686739006</text>
<text x="955.40" y="766.10" font-size="12.71" textLength="63.40" lengthAdjust="spacingAndGlyphs" fill="#333333" >6/29/2023,</text>
<text x="955.40" y="784.00" font-size="12.71" textLength="52.50" lengthAdjust="spacingAndGlyphs" fill="#333333" >03:11 AM</text>
<text x="1044.00" y="766.10" font-size="12.71" textLength="63.40" lengthAdjust="spacingAndGlyphs" fill="#333333" >6/29/2023,</text>
<text x="1044.00" y="784.00" font-size="12.71" textLength="52.50" lengthAdjust="spacingAndGlyphs" fill="#333333" >10:35 AM</text>
<rect x="1141" y="759.00" width="50" height="24.8" rx="3" fill="#03a9f4"/>
<text x="1145.30" y="774.90" font-size="12.50" textLength="41.30" lengthAdjust="spacingAndGlyphs" fill="#fff" >Created</text>
<text x="1221.60" y="766.10" font-size="12.71" textLength="63.40" lengthAdjust="spacingAndGlyphs" fill="#333333" >6/15/2023,</text>
<text x="1221.60" y="784.00" font-size="12.71" textLength="52.50" lengthAdjust="spacingAndGlyphs" fill="#333333" >09:27 AM</text>
<text x="1310.90" y="774.90" font-size="12.50" textLength="14.60" lengthAdjust="spacingAndGlyphs" fill="#333333" >No</text>
<text x="1400.00" y="774.90" font-size="12.71" textLength="3.40" lengthAdjust="spacingAndGlyphs" fill="#333333" >-</text>
<text x="1488.30" y="774.90" font-size="12.50" textLength="58.10" lengthAdjust="spacingAndGlyphs" fill="#333333" >Semifinish</text>
<rect x="246.00" y="804.00" width="1324.00" height="65.00" fill="#ffffff" />
<circle cx="263.7" cy="831.70" r="1.35" fill="#2a2a2a"/>
<circle cx="263.7" cy="835.50" r="1.35" fill="#2a2a2a"/>
<circle cx="263.7" cy="839.30" r="1.35" fill="#2a2a2a"/>
<rect x="290.8" y="827.80" width="18.4" height="18.4" rx="2" fill="none" stroke="#3c3c3c" stroke-width="1.6"/>
<text x="325.40" y="839.90" font-size="12.71" textLength="35.34" lengthAdjust="spacingAndGlyphs" fill="#333333" >57489</text>
<text x="421.60" y="839.90" font-size="12.71" textLength="35.34" lengthAdjust="spacingAndGlyphs" fill="#333333" >57487</text>
<text x="510.60" y="839.90" font-size="12.71" textLength="56.55" lengthAdjust="spacingAndGlyphs" fill="#333333" >61415067</text>
<text x="599.40" y="839.90" font-size="12.50" textLength="51.12" lengthAdjust="spacingAndGlyphs" fill="#333333" >TV-PYR-5</text>
<text x="688.40" y="839.90" font-size="12.50" textLength="44.00" lengthAdjust="spacingAndGlyphs" fill="#333333" >TV Pyr 5</text>
<text x="786.14" y="839.90" font-size="12.71" textLength="28.86" lengthAdjust="spacingAndGlyphs" fill="#333333" >5 pcs</text>
<circle cx="832.3" cy="837.10" r="5.1" fill="#f05a5a"/>
<text x="866.60" y="839.90" font-size="12.71" textLength="78.32" lengthAdjust="spacingAndGlyphs" fill="#333333" >P1686739006</text>
<text x="955.40" y="831.10" font-size="12.71" textLength="63.40" lengthAdjust="spacingAndGlyphs" fill="#333333" >6/30/2023,</text>
<text x="955.40" y="849.00" font-size="12.71" textLength="52.50" lengthAdjust="spacingAndGlyphs" fill="#333333" >04:03 AM</text>
<text x="1044.00" y="831.10" font-size="12.71" textLength="63.40" lengthAdjust="spacingAndGlyphs" fill="#333333" >6/30/2023,</text>
<text x="1044.00" y="849.00" font-size="12.71" textLength="52.50" lengthAdjust="spacingAndGlyphs" fill="#333333" >07:41 AM</text>
<rect x="1141" y="824.00" width="50" height="24.8" rx="3" fill="#03a9f4"/>
<text x="1145.30" y="839.90" font-size="12.50" textLength="41.30" lengthAdjust="spacingAndGlyphs" fill="#fff" >Created</text>
<text x="1221.60" y="831.10" font-size="12.71" textLength="63.40" lengthAdjust="spacingAndGlyphs" fill="#333333" >6/15/2023,</text>
<text x="1221.60" y="849.00" font-size="12.71" textLength="52.50" lengthAdjust="spacingAndGlyphs" fill="#333333" >09:27 AM</text>
<text x="1310.90" y="839.90" font-size="12.50" textLength="14.60" lengthAdjust="spacingAndGlyphs" fill="#333333" >No</text>
<text x="1400.00" y="839.90" font-size="12.71" textLength="3.40" lengthAdjust="spacingAndGlyphs" fill="#333333" >-</text>
<text x="1488.30" y="839.90" font-size="12.50" textLength="58.10" lengthAdjust="spacingAndGlyphs" fill="#333333" >Semifinish</text>
<rect x="1586.00" y="411.00" width="255.00" height="190.40" fill="#ae87cf" />
<rect x="1586.00" y="411.00" width="255.00" height="66.00" fill="#8e63ab" />
<text x="1598.60" y="450.00" font-size="17.44" textLength="175.40" lengthAdjust="spacingAndGlyphs" fill="#fff" >TV-PYR-01 | TV-PYR-01</text>
<circle cx="1808" cy="443.9" r="19.9" fill="none" stroke="#fff" stroke-width="2.2"/>
<path d="M1803.2 432 L1810.9 432 L1810.9 444.2 L1818.1 444.2 L1807 455 L1795.9 444.2 L1803.2 444.2 Z" fill="#fff"/>
<text x="1598.60" y="506.70" font-size="16.13" textLength="62.40" lengthAdjust="spacingAndGlyphs" fill="#fff" >Delayed</text>
<text x="1670.50" y="506.70" font-size="16.24" textLength="43.90" lengthAdjust="spacingAndGlyphs" fill="#fff" font-weight="700" >5 sec.</text>
<rect x="1598.00" y="521.00" width="231.00" height="5.50" fill="#ffffff" />
<text x="1598.60" y="558.00" font-size="16.57" textLength="54.10" lengthAdjust="spacingAndGlyphs" fill="#fff" >Queue:</text>
<text x="1656.50" y="558.00" font-size="16.67" textLength="163.80" lengthAdjust="spacingAndGlyphs" fill="#fff" font-weight="700" >16 days 7 hr. 58 min.</text>
<text x="1598.60" y="583.00" font-size="16.67" textLength="53.40" lengthAdjust="spacingAndGlyphs" fill="#fff" font-weight="700" >27 sec.</text>
<rect x="1586.00" y="612.00" width="255.00" height="189.50" fill="#b3896f" />
<rect x="1586.00" y="612.00" width="255.00" height="66.00" fill="#8d6e5a" />
<text x="1598.60" y="650.00" font-size="17.44" textLength="160.80" lengthAdjust="spacingAndGlyphs" fill="#fff" >TV-PYR-2 | TV-PYR-2</text>
<circle cx="1808" cy="645.2" r="19.9" fill="none" stroke="#fff" stroke-width="2.2"/>
<path d="M1803.2 657.1 L1810.9 657.1 L1810.9 644.9 L1818.1 644.9 L1807 634.1 L1795.9 644.9 L1803.2 644.9 Z" fill="#fff"/>
<text x="1598.60" y="707.50" font-size="16.13" textLength="82.00" lengthAdjust="spacingAndGlyphs" fill="#fff" >In advance</text>
<text x="1689.50" y="707.50" font-size="16.24" textLength="110.50" lengthAdjust="spacingAndGlyphs" fill="#fff" font-weight="700" >1 days 16 hr. 2</text>
<text x="1598.60" y="733.00" font-size="16.24" textLength="29.40" lengthAdjust="spacingAndGlyphs" fill="#fff" font-weight="700" >sec.</text>
<rect x="1598.00" y="746.00" width="231.00" height="6.00" fill="#ffffff" />
<text x="1598.60" y="783.00" font-size="16.57" textLength="54.10" lengthAdjust="spacingAndGlyphs" fill="#fff" >Queue:</text>
<text x="1656.50" y="783.00" font-size="16.67" textLength="52.10" lengthAdjust="spacingAndGlyphs" fill="#fff" font-weight="700" >5 days</text>
<defs><filter id="sh" x="-30%" y="-30%" width="160%" height="160%"><feDropShadow dx="1.5" dy="2" stdDeviation="1.8" flood-color="#000" flood-opacity="0.45"/></filter></defs>
<g filter="url(#sh)"><rect x="282.2" y="608.1" width="39.1" height="126" fill="none" stroke="#f03c3c" stroke-width="3.4"/><rect x="545.7" y="341.7" width="253.4" height="63.5" fill="none" stroke="#f03c3c" stroke-width="3.4"/></g>
<g filter="url(#sh)"><path d="M249.30 568.50 L264.15 586.37" stroke="#f03c3c" stroke-width="8" stroke-linecap="round"/><polygon points="279.30,604.60 250.44,592.56 272.75,574.03" fill="#f03c3c"/></g>
<g filter="url(#sh)"><path d="M858.30 279.80 L818.43 320.85" stroke="#f03c3c" stroke-width="8" stroke-linecap="round"/><polygon points="800.80,339.00 810.67,307.74 831.76,328.22" fill="#f03c3c"/></g>
<g filter="url(#sh)"><circle cx="223.2" cy="575" r="20.3" fill="#f03c3c"/><circle cx="880" cy="258" r="20" fill="#f03c3c"/></g>
<text x="217.70" y="584.50" font-size="26.84" textLength="11.00" lengthAdjust="spacingAndGlyphs" fill="#fff"  stroke="#fff" stroke-width="0.7">1</text>
<text x="873.00" y="268.80" font-size="26.84" textLength="14.00" lengthAdjust="spacingAndGlyphs" fill="#fff"  stroke="#fff" stroke-width="0.7">2</text>
<rect x="0.00" y="821.00" width="1895.00" height="45.00" fill="#000000" fill-opacity="0.705"/>
<text x="676.00" y="848.75" font-size="16.57" textLength="465.50" lengthAdjust="spacingAndGlyphs" fill="#fff"  stroke="#fff" stroke-width="0.2">Selected items: 2 ; TV-PYR-01 (5x) ; TV-PYR-30 (5x) ; Total quantity: 10x</text>
<rect x="1818.00" y="821.00" width="77.00" height="45.00" fill="#f25a5b" />
<path d="M1851.8 840.2 L1860.8 849.2 M1860.8 840.2 L1851.8 849.2" stroke="#fff" stroke-width="2.2"/>
<rect x="1895.00" y="1.00" width="25.00" height="865.00" fill="#f1f1f1" />
<rect x="1897.30" y="26.00" width="20.70" height="98.00" fill="#c1c1c1" />
<polygon points="1902,17 1913,17 1907.5,11" fill="#a3a3a3"/>
<polygon points="1902,851 1913,851 1907.5,857" fill="#505050"/>
</svg>
</body></html>
